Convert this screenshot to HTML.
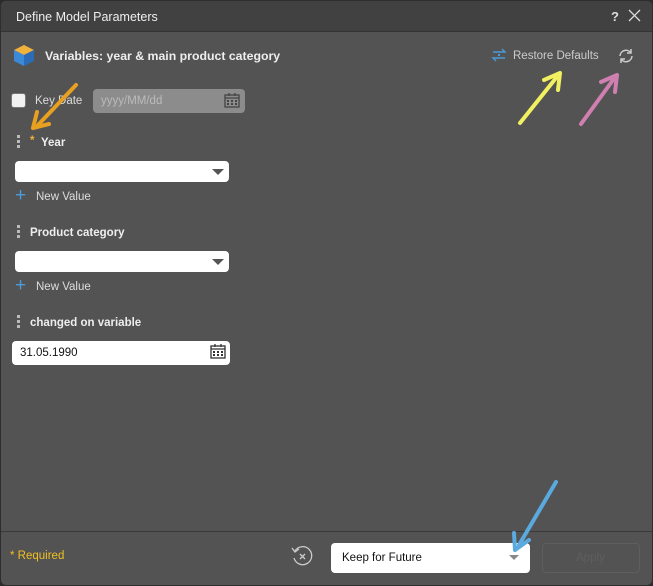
<!DOCTYPE html><html><head><style>
*{box-sizing:border-box;margin:0;padding:0}
body{width:653px;height:586px;background:#2b2b2b;font-family:"Liberation Sans",sans-serif;font-size:11.5px;color:#eee;position:relative;overflow:hidden}
.win{position:absolute;left:0;top:0;width:653px;height:586px;background:#535353;border:1px solid #2e2e2e;border-radius:6px;overflow:hidden}
.title{position:absolute;left:0;top:0;width:100%;height:31px;background:#414141;border-bottom:1px solid #333}
.a{position:absolute;white-space:nowrap}
.box{position:absolute;background:#fff;border-radius:4px}
.tri{position:absolute;width:0;height:0;border-left:6px solid transparent;border-right:6px solid transparent;border-top:6px solid #555}
.dots{position:absolute;width:3px}
.dots i{display:block;width:3px;height:3px;background:#bbb;margin-bottom:2px}
</style></head><body><div class="win">
<div class="title"><div class="a" style="left:15px;top:9px;font-size:12.5px;color:#eee">Define Model Parameters</div>
<div class="a" style="left:610px;top:8px;font-size:13px;font-weight:bold;color:#ddd">?</div>
<svg class="a" style="left:627px;top:8px" width="13" height="13"><path d="M1 1L12 12M12 1L1 12" stroke="#ddd" stroke-width="1.3"/></svg></div>
<svg class="a" style="left:11px;top:42px" width="24" height="24"><path d="M12 2L22 7L12 12L2 7Z" fill="#f0b23a"/><path d="M2 7L12 12V23L2 18Z" fill="#3b8ad8"/><path d="M22 7L12 12V23L22 18Z" fill="#2c6bb8"/></svg>
<div class="a" style="left:44px;top:48px;font-size:12.3px;font-weight:bold;color:#eee">Variables: year &amp; main product category</div>
<svg class="a" style="left:489px;top:46px" width="18" height="16"><path d="M3 5H15L12 2M15 11H3L6 14" stroke="#4a9bd8" fill="none" stroke-width="1.4"/><rect x="8" y="7" width="2" height="2" fill="#4a9bd8"/></svg>
<div class="a" style="left:512px;top:49px;color:#ccc">Restore Defaults</div>
<svg class="a" style="left:616px;top:46px" width="18" height="18"><path d="M3 9A6 6 0 0 1 14 6M15 9A6 6 0 0 1 4 12" stroke="#ccc" fill="none" stroke-width="1.5"/><path d="M14 2V6H10M4 16V12H8" stroke="#ccc" fill="none" stroke-width="1.5"/></svg>
<div class="a" style="left:10px;top:92px;width:15px;height:15px;background:#f2f2f2;border-radius:3px;border:1px solid #777"></div>
<div class="a" style="left:34px;top:94px;color:#ddd">Key Date</div>
<div class="a" style="left:92px;top:88px;width:152px;height:24px;background:#8c8c8c;border-radius:4px"></div>
<div class="a" style="left:100px;top:94px;color:#bbb">yyyy/MM/dd</div>
<svg class="a" style="left:223px;top:91px" width="16" height="16"><rect x="1" y="3" width="14" height="12" fill="none" stroke="#444" stroke-width="1.3"/><path d="M1 6H15M5 1V4M11 1V4" stroke="#444" stroke-width="1.3"/><path d="M3 8h2v2H3zM7 8h2v2H7zM11 8h2v2h-2zM3 11h2v2H3zM7 11h2v2H7zM11 11h2v2h-2z" fill="#444"/></svg>
<div class="dots" style="left:16px;top:134px"><i></i><i></i><i></i></div>
<div class="a" style="left:29px;top:134px;color:#f0b23a;font-weight:bold">*</div>
<div class="a" style="left:40px;top:136px;font-weight:bold">Year</div>
<div class="box" style="left:14px;top:160px;width:214px;height:21px"></div><div class="tri" style="left:211px;top:168px"></div>
<div class="a" style="left:14px;top:186px;color:#4a9bd8;font-size:19px;line-height:18px">+</div>
<div class="a" style="left:35px;top:190px;color:#ddd">New Value</div>
<div class="dots" style="left:16px;top:224px"><i></i><i></i><i></i></div>
<div class="a" style="left:29px;top:226px;font-weight:bold">Product category</div>
<div class="box" style="left:14px;top:250px;width:214px;height:21px"></div><div class="tri" style="left:211px;top:258px"></div>
<div class="a" style="left:14px;top:276px;color:#4a9bd8;font-size:19px;line-height:18px">+</div>
<div class="a" style="left:35px;top:280px;color:#ddd">New Value</div>
<div class="dots" style="left:16px;top:314px"><i></i><i></i><i></i></div>
<div class="a" style="left:29px;top:316px;font-weight:bold">changed on variable</div>
<div class="box" style="left:11px;top:340px;width:218px;height:24px"></div>
<div class="a" style="left:19px;top:346px;color:#111">31.05.1990</div>
<svg class="a" style="left:209px;top:342px" width="16" height="16"><rect x="1" y="3" width="14" height="12" fill="none" stroke="#333" stroke-width="1.3"/><path d="M1 6H15M5 1V4M11 1V4" stroke="#333" stroke-width="1.3"/><path d="M3 8h2v2H3zM7 8h2v2H7zM11 8h2v2h-2zM3 11h2v2H3zM7 11h2v2H7zM11 11h2v2h-2z" fill="#333"/></svg>
<div class="a" style="left:0;top:530px;width:100%;height:1px;background:#3a3a3a"></div>
<div class="a" style="left:9px;top:549px;color:#f0c020">* Required</div>
<svg class="a" style="left:289px;top:543px" width="24" height="24"><path d="M5 7A9 9 0 1 1 4 14" stroke="#ccc" fill="none" stroke-width="1.3"/><path d="M2 4L5 8L9 5" stroke="#ccc" fill="none" stroke-width="1.3"/><path d="M10 10L15 15M15 10L10 15" stroke="#ccc" stroke-width="1.3"/></svg>
<div class="box" style="left:330px;top:542px;width:199px;height:30px"></div>
<div class="a" style="left:341px;top:551px;color:#111">Keep for Future</div>
<div class="tri" style="left:508px;top:554px;border-top-color:#888;border-left-width:5px;border-right-width:5px;border-top-width:5px"></div>
<div class="a" style="left:541px;top:542px;width:98px;height:30px;border:1px solid #5e5e5e;border-radius:4px"></div>
<div class="a" style="left:575px;top:551px;color:#5e5e5e">Apply</div>
</div>
<svg class="a" style="left:0;top:0" width="653" height="586">
<g stroke-linecap="round" fill="none" stroke-width="4">
<path d="M76 85L38 125" stroke="#e8a020"/><path d="M33 128L37 112M33 128L49 124" stroke="#e8a020"/>
<path d="M520 123L556 78" stroke="#f0f060"/><path d="M560 73L544 80M560 73L558 90" stroke="#f0f060"/>
<path d="M581 124L613 80" stroke="#d080b0"/><path d="M617 75L601 82M617 75L615 92" stroke="#d080b0"/>
<path d="M556 482L519 545" stroke="#5aaae0"/><path d="M515 550L514 533M515 550L529 540" stroke="#5aaae0"/>
</g></svg>
</body></html>
